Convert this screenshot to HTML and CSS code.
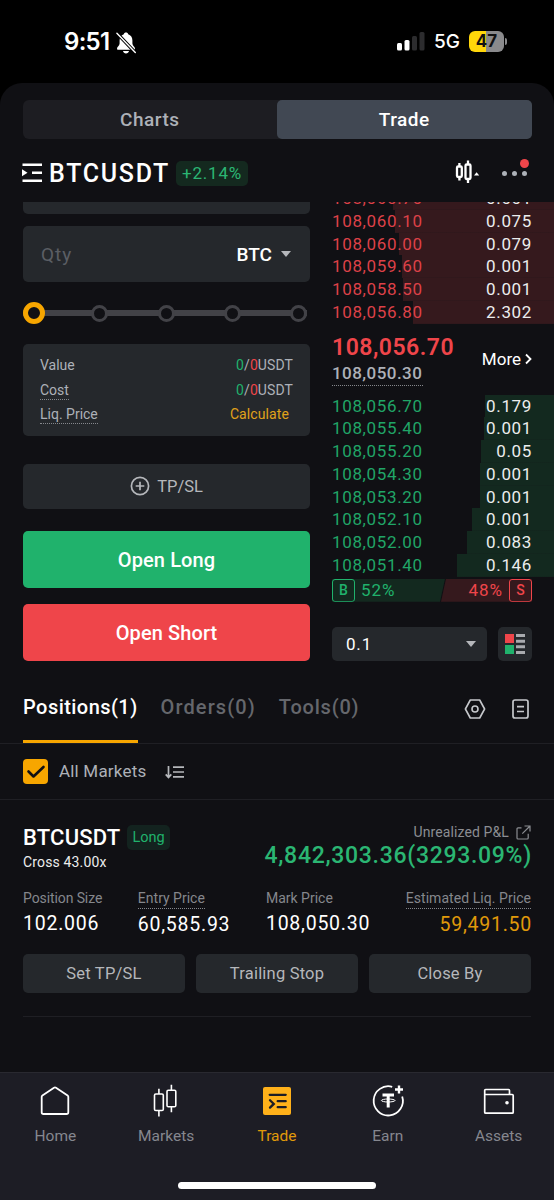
FILE: index.html
```html
<!DOCTYPE html>
<html lang="en">
<head>
    <meta charset="UTF-8">
    <meta name="viewport" content="width=device-width, initial-scale=1">
    <title>BTCUSDT Trade</title>
    <link rel="stylesheet" href="styles.css">
</head>
<body>

<header class="status-bar">
    <div class="status-left">
        <span class="clock">9:51</span>
        <svg width="20" height="22" viewBox="0 0 20 22">
            <path d="M10 .6c1.200 0 2 .7 2.200 1.700 2.700.9 4.200 3.200 4.200 6.200v3c0 2 2.600 3.300 2.600 5.200 0 .7-.5 1.100-1.200 1.100H2.200c-.7 0-1.200-.4-1.200-1.100 0-1.900 2.600-3.200 2.600-5.200v-3c0-3 1.500-5.300 4.200-6.200C8 1.300 8.800.6 10 .6zM7 18.900h6c-.3 1.500-1.500 2.500-3 2.500s-2.700-1-3-2.500z" fill="#fff"/>
            <path d="M.9 1.200l18.400 19.400" stroke="#000" stroke-width="3.400"/>
            <path d="M.9 1.200l18.400 19.400" stroke="#fff" stroke-width="1.400" stroke-linecap="round"/>
        </svg>
    </div>
    <div class="status-right">
        <svg class="signal" width="28" height="19" viewBox="0 0 28 19">
            <rect x="0" y="11" width="5" height="7.500" rx="1.500" fill="#fff"/>
            <rect x="7.500" y="8" width="5" height="10.500" rx="1.500" fill="#fff"/>
            <rect x="15" y="4" width="5" height="14.500" rx="1.500" fill="#2c2c2e"/>
            <rect x="22.500" y="0" width="5" height="18.500" rx="1.500" fill="#2c2c2e"/>
        </svg>
        <span class="network">5G</span>
        <span class="battery">47</span>
        <span class="battery-tip"></span>
    </div>
</header>

<main class="screen">
    <div class="segmented">
        <div class="segment">Charts</div>
        <div class="segment active">Trade</div>
    </div>

    <div class="pair-bar">
        <svg width="21" height="20" viewBox="0 0 21 20">
            <path d="M.5 1.800h19.500M10 9.800h10M.5 17.800h19.500" stroke="#fff" stroke-width="2.400"/>
            <path d="M0 6.300l5.500 3.500L0 13.300z" fill="#fff"/>
        </svg>
        <h1 class="pair-name">BTCUSDT</h1>
        <span class="change">+2.14%</span>
        <div class="pair-tools">
            <svg width="25" height="24" viewBox="0 0 25 24" fill="none" stroke="#fff" stroke-width="2.300">
                <rect x="2" y="6.500" width="4.800" height="10.500" rx="1.200"/>
                <path d="M4.400 3v3.500M4.400 17v3.500M13 .5v4M13 19v4"/>
                <rect x="10.500" y="4.500" width="5" height="14.500" rx="1.200"/>
                <path d="M19 15.500h5.200l-2.600-3.200z" fill="#fff" stroke="none"/>
            </svg>
            <div class="more-dots">
                <i></i><i></i><i></i>
                <span class="alert-dot"></span>
            </div>
        </div>
    </div>

    <section class="trade">
        <div class="order-form">
            <div class="field price-field"></div>
            <div class="field qty-field">
                <span class="placeholder">Qty</span>
                <span class="coin">BTC</span>
                <span class="caret"></span>
            </div>
            <div class="slider">
                <span class="knob"></span>
                <span class="stop"></span>
                <span class="stop"></span>
                <span class="stop"></span>
                <span class="stop"></span>
            </div>
            <div class="field summary">
                <div class="summary-row"><span>Value</span><span><b class="up">0</b>/<b class="down">0</b>USDT</span></div>
                <div class="summary-row"><span class="hint">Cost</span><span><b class="up">0</b>/<b class="down">0</b>USDT</span></div>
                <div class="summary-row"><span class="hint">Liq. Price</span><span class="calculate">Calculate</span></div>
            </div>
            <div class="field tpsl">
                <svg width="20" height="20" viewBox="0 0 20 20" fill="none" stroke="#b5b7bb" stroke-width="1.700">
                    <circle cx="10" cy="10" r="8.600"/>
                    <path d="M5.700 10h8.600M10 5.700v8.600"/>
                </svg>
                <span>TP/SL</span>
            </div>
            <button class="open long">Open Long</button>
            <button class="open short">Open Short</button>
        </div>

        <div class="order-book">
            <div class="asks">
                <div class="level" style="--depth: 161px"><span>108,060.70</span><span>0.001</span></div>
                <div class="level" style="--depth: 159px"><span>108,060.10</span><span>0.075</span></div>
                <div class="level" style="--depth: 155px"><span>108,060.00</span><span>0.079</span></div>
                <div class="level" style="--depth: 152px"><span>108,059.60</span><span>0.001</span></div>
                <div class="level" style="--depth: 151px"><span>108,058.50</span><span>0.001</span></div>
                <div class="level" style="--depth: 141px"><span>108,056.80</span><span>2.302</span></div>
            </div>
            <div class="last">
                <div>
                    <div class="last-price">108,056.70</div>
                    <div class="mark-price">108,050.30</div>
                </div>
                <div class="more">
                    <span>More</span>
                    <svg width="7" height="12" viewBox="0 0 7 12" fill="none" stroke="#fff" stroke-width="1.800"><path d="M1 1.500L5.500 6 1 10.500"/></svg>
                </div>
            </div>
            <div class="bids">
                <div class="level" style="--depth: 69px"><span>108,056.70</span><span>0.179</span></div>
                <div class="level" style="--depth: 70px"><span>108,055.40</span><span>0.001</span></div>
                <div class="level" style="--depth: 73px"><span>108,055.20</span><span>0.05</span></div>
                <div class="level" style="--depth: 74px"><span>108,054.30</span><span>0.001</span></div>
                <div class="level" style="--depth: 74px"><span>108,053.20</span><span>0.001</span></div>
                <div class="level" style="--depth: 82px"><span>108,052.10</span><span>0.001</span></div>
                <div class="level" style="--depth: 87px"><span>108,052.00</span><span>0.083</span></div>
                <div class="level" style="--depth: 97px"><span>108,051.40</span><span>0.146</span></div>
            </div>
            <div class="ratio">
                <div class="buy"><em>B</em><span>52%</span></div>
                <div class="sell"><span>48%</span><em>S</em></div>
            </div>
            <div class="book-controls">
                <div class="step">
                    <span>0.1</span>
                    <span class="caret"></span>
                </div>
                <div class="book-layout">
                    <svg width="20" height="20" viewBox="0 0 20 20">
                        <path d="M0 0h9v9H0z" fill="#ef454a"/>
                        <path d="M0 11h9v9H0z" fill="#20b26c"/>
                        <path d="M11 1.500h9M11 7.200h9M11 12.800h9M11 18.500h9" stroke="#a9abaf" stroke-width="3"/>
                    </svg>
                </div>
            </div>
        </div>
    </section>

    <nav class="tabs">
        <div class="tab active">Positions(1)</div>
        <div class="tab orders">Orders(0)</div>
        <div class="tab tools">Tools(0)</div>
        <div class="tab-icons">
            <svg width="22" height="20" viewBox="0 0 22 20" fill="none" stroke="#c6c8cc" stroke-width="1.600" stroke-linejoin="round">
                <path d="M6.300 1h9.400L20.600 10l-4.900 9H6.300L1.400 10z"/>
                <circle cx="11" cy="10" r="3"/>
            </svg>
            <svg width="17" height="20" viewBox="0 0 17 20" fill="none" stroke="#c6c8cc" stroke-width="1.700">
                <rect x="1" y="1" width="15" height="18" rx="2"/>
                <path d="M5 7.700h7M5 12.500h7"/>
            </svg>
        </div>
    </nav>

    <div class="filter">
        <span class="checkbox">
            <svg width="18" height="14" viewBox="0 0 18 14" fill="none" stroke="#101014" stroke-width="2.600" stroke-linecap="round" stroke-linejoin="round"><path d="M1.500 6.500l5 5L16.500 2"/></svg>
        </span>
        <span class="filter-label">All Markets</span>
        <svg width="20" height="14" viewBox="0 0 20 14" fill="none" stroke="#b5b7bb" stroke-width="1.700">
            <path d="M3.500 1v11M.7 9.400l2.800 3 2.800-3M8 2.200h11M8 7h11M8 11.800h11"/>
        </svg>
    </div>

    <section class="position">
        <div class="position-head">
            <div>
                <div class="position-title">
                    <h2>BTCUSDT</h2>
                    <span class="side">Long</span>
                </div>
                <div class="margin-mode">Cross 43.00x</div>
            </div>
            <div class="pnl">
                <div class="pnl-label">
                    <span>Unrealized P&amp;L</span>
                    <svg width="15" height="15" viewBox="0 0 15 15" fill="none" stroke="#8b8d92" stroke-width="1.200">
                        <path d="M5.500 2.800H2a1 1 0 0 0-1 1V13a1 1 0 0 0 1 1h9.200a1 1 0 0 0 1-1V8.800M8.500 1H14v5.500M14 1L6.300 8.700"/>
                    </svg>
                </div>
                <div class="pnl-value">4,842,303.36(3293.09%)</div>
            </div>
        </div>
        <div class="stats">
            <div class="stat"><span>Position Size</span><strong>102.006</strong></div>
            <div class="stat"><span class="hint">Entry Price</span><strong>60,585.93</strong></div>
            <div class="stat"><span>Mark Price</span><strong>108,050.30</strong></div>
            <div class="stat liq"><span class="hint">Estimated Liq. Price</span><strong>59,491.50</strong></div>
        </div>
        <div class="actions">
            <button>Set TP/SL</button>
            <button>Trailing Stop</button>
            <button>Close By</button>
        </div>
    </section>
</main>

<footer class="bottom-nav">
    <div class="nav-items">
        <div class="nav-item">
            <svg width="32" height="32" viewBox="0 0 32 32" fill="none" stroke="#fff" stroke-width="1.800" stroke-linejoin="round"><path d="M2.700 11.800Q2.700 11 3.400 10.500L15 2.700q1-.6 2 0l11.600 7.800q.7.500.7 1.300v15.400q0 1.800-1.800 1.800h-23q-1.800 0-1.800-1.800z"/></svg>
            <span>Home</span>
        </div>
        <div class="nav-item">
            <svg width="32" height="32" viewBox="0 0 32 32" fill="none" stroke="#fff" stroke-width="1.600">
                <rect x="4.500" y="9" width="8.800" height="16.500" rx="1.300"/>
                <rect x="17" y="5.200" width="8.800" height="16.500" rx="1.300"/>
                <path d="M8.900 3.800V9M8.900 25.500V31.500M21.400-.2v5.400M21.400 21.700v5.600"/>
            </svg>
            <span>Markets</span>
        </div>
        <div class="nav-item active">
            <svg width="32" height="32" viewBox="0 0 32 32" fill="none">
                <rect x="2" y="2" width="28" height="28" rx="2" fill="#ffb11a"/>
                <path d="M8.700 9.800h16M16.700 16.200h8M16.700 22.200h8M9 15.200l3.800 3.700L9 22.600" stroke="#1d1d25" stroke-width="2.300" stroke-linecap="round"/>
            </svg>
            <span>Trade</span>
        </div>
        <div class="nav-item">
            <svg width="32" height="32" viewBox="0 0 32 32" fill="none" stroke="#fff" stroke-width="1.800">
                <path d="M20.200 1.800A14.600 14.600 0 1 0 30.200 11.500"/>
                <path d="M27 .5v8M23 4.500h8" stroke-width="2.400"/>
                <path d="M10.500 10h11.500M16.200 10V22.500" stroke-width="3"/>
                <ellipse cx="16.200" cy="15.500" rx="6.800" ry="1.500" stroke-width="1"/>
            </svg>
            <span>Earn</span>
        </div>
        <div class="nav-item">
            <svg width="32" height="32" viewBox="0 0 32 32" fill="none" stroke="#fff" stroke-width="1.700" stroke-linejoin="round">
                <path d="M26.500 9.500V5.500q0-1-1-1H2.700q-1 0-1 1v21.700q0 1 1 1h26.500q1 0 1-1V10.500q0-1-1-1H1.700"/>
                <circle cx="24" cy="17.800" r="1.800" fill="#fff" stroke="none"/>
            </svg>
            <span>Assets</span>
        </div>
    </div>
    <div class="home-indicator"></div>
</footer>

</body>
</html>
```
FILE: styles.css
```css
* {
    box-sizing: border-box;
}

body {
    display: flex;
    flex-direction: column;
    height: 1200px;
    margin: 0;
    background: #000;
    color: #fff;
    font-family: Roboto, "Noto Sans", sans-serif;
    overflow: hidden;
}

svg {
    display: block;
    flex: none;
    overflow: visible;
}

h1, h2 {
    margin: 0;
    font-weight: 500;
}

button {
    padding: 0;
    border: none;
    font-family: inherit;
}

/* status bar */
.status-bar {
    display: flex;
    justify-content: space-between;
    height: 83px;
    padding: 0 47px 0 64px;
}

.status-left,
.status-right {
    display: flex;
    align-items: center;
    height: 83px;
}

.status-left svg {
    margin: 2px 0 0 1px;
}

.clock {
    margin-right: 6px;
    font: 600 24px Inter, sans-serif;
    letter-spacing: -0.7px;
}

.network {
    margin: 0 9px 0 9px;
    font: 500 19px Inter, sans-serif;
}

.battery {
    width: 35px;
    height: 21px;
    border-radius: 6px;
    background: linear-gradient(to right, #ffd60a 17px, #8a8a8c 17px);
    color: #111;
    font: 700 17px/21px Inter, sans-serif;
    text-align: center;
}

.battery-tip {
    width: 2px;
    height: 7px;
    margin-left: 1px;
    border-radius: 0 2px 2px 0;
    background: #8a8a8c;
}

/* screen */
.screen {
    flex: 1;
    padding-top: 17px;
    border-radius: 22px 22px 0 0;
    background: #101014;
}

.segmented {
    display: flex;
    height: 39px;
    margin: 0 22.500px;
    border-radius: 6px;
    background: #1d1d22;
}

.segment {
    flex: 1;
    border-radius: 5px;
    color: #adb1b8;
    font-size: 19px;
    font-weight: 500;
    line-height: 40px;
    letter-spacing: 0.5px;
    text-align: center;
}

.segment.active {
    background: #414853;
    color: #fff;
}

.pair-bar {
    display: flex;
    align-items: center;
    height: 63px;
    padding: 5px 27px 0 22px;
}

.pair-name {
    margin-left: 6px;
    font-size: 25px;
    letter-spacing: 1.700px;
}

.change {
    height: 25px;
    margin-left: 6px;
    padding: 0 6px;
    border-radius: 5px;
    background: #14291f;
    color: #2bb673;
    font-size: 17px;
    line-height: 25px;
    letter-spacing: 0.8px;
}

.pair-tools {
    display: flex;
    align-items: center;
    gap: 22px;
    margin: -3px 0 0 auto;
}

.more-dots {
    position: relative;
    display: flex;
    gap: 5px;
    margin-top: 3px;
}

.more-dots i {
    width: 5px;
    height: 5px;
    border-radius: 50%;
    background: #adb1b8;
}

.alert-dot {
    position: absolute;
    top: -12px;
    right: -2px;
    width: 9px;
    height: 9px;
    border-radius: 50%;
    background: #ef454a;
}

/* order form */
.trade {
    display: flex;
    height: 459px;
    padding-left: 23px;
    overflow: hidden;
}

.order-form {
    display: flex;
    flex-direction: column;
    width: 287px;
    margin-right: 22px;
}

.field {
    flex: none;
    border-radius: 5px;
    background: #25282c;
}

.price-field {
    height: 56px;
    margin-top: -44px;
}

.qty-field {
    display: flex;
    align-items: center;
    height: 56px;
    margin-top: 12px;
    padding: 0 19px 0 18px;
    font-size: 19px;
}

.placeholder {
    color: #5b5e64;
    letter-spacing: 1px;
}

.coin {
    margin-left: auto;
    font-weight: 500;
}

.caret {
    margin-left: 9px;
    border: 5px solid transparent;
    border-top: 6px solid #b5b7bb;
    border-bottom: 0;
}

.slider {
    display: flex;
    align-items: center;
    justify-content: space-between;
    height: 22px;
    margin: 20px 3px 0 0;
    background: linear-gradient(#424247, #424247) center / 100% 6px no-repeat;
}

.knob {
    width: 22px;
    height: 22px;
    border: 5px solid #f7a600;
    border-radius: 50%;
    background: #101014;
}

.stop {
    width: 17px;
    height: 17px;
    border: 3px solid #424247;
    border-radius: 50%;
    background: #101014;
}

.knob + .stop {
    margin-left: -3px;
}

.summary {
    height: 92px;
    margin-top: 20px;
    padding: 9px 17px 0;
    color: #adb1b8;
    font-size: 14px;
}

.summary-row {
    display: flex;
    align-items: flex-start;
    justify-content: space-between;
    height: 24.500px;
    line-height: 24.500px;
}

.summary-row span + span {
    letter-spacing: 0.1px;
}

.summary-row b {
    font-weight: 400;
}

.up {
    color: #20b26c;
}

.down {
    color: #ef454a;
}

.hint {
    border-bottom: 1px dotted #85878c;
}

.summary-row .hint {
    height: 22px;
}

.summary-row .calculate {
    margin-right: 4px;
    color: #e0a21a;
}

.tpsl {
    display: flex;
    align-items: center;
    justify-content: center;
    gap: 7px;
    height: 45px;
    margin-top: 28px;
    padding-bottom: 1px;
    color: #b5b7bb;
    font-size: 16.500px;
}

.open {
    flex: none;
    height: 57px;
    border-radius: 5px;
    color: #fff;
    font-size: 20px;
    font-weight: 500;
    letter-spacing: 0.1px;
}

.long {
    margin-top: 22px;
    background: #20b26c;
}

.short {
    margin-top: 16px;
    background: #ef454a;
}

/* order book */
.order-book {
    flex: 1;
}

.asks {
    margin-top: -14.800px;
}

.level {
    display: flex;
    justify-content: space-between;
    height: 22.750px;
    padding-right: 22px;
    background: linear-gradient(#13291f, #13291f) right / var(--depth) 100% no-repeat;
    color: #eceded;
    font-size: 17px;
    line-height: 23px;
    letter-spacing: 0.65px;
}

.level span:first-child {
    color: #20a567;
}

.asks .level {
    background-image: linear-gradient(#35191d, #35191d);
}

.asks .level span:first-child {
    color: #dd4148;
}

.last {
    display: flex;
    justify-content: space-between;
    height: 70.800px;
    padding: 10px 22px 0 0;
}

.last-price {
    color: #ef454a;
    font-size: 23px;
    font-weight: 600;
    line-height: 28px;
    letter-spacing: 0.5px;
}

.mark-price {
    width: 91px;
    height: 24px;
    border-bottom: 1px dotted #85878c;
    color: #adb1b8;
    font-size: 17px;
    font-weight: 500;
    line-height: 23px;
    letter-spacing: 0.45px;
}

.more {
    display: flex;
    align-items: center;
    gap: 4px;
    height: 51px;
    font-size: 17px;
}

.ratio {
    display: flex;
    gap: 1px;
    height: 23px;
    margin: 2.200px 22px 0 0;
    font-size: 17px;
    line-height: 23px;
}

.ratio span {
    letter-spacing: 1px;
}

.buy,
.sell {
    display: flex;
    gap: 6px;
}

.buy {
    width: 113px;
    background: #13291f;
    clip-path: polygon(0 0, 100% 0, 108px 100%, 0 100%);
    color: #20b26c;
}

.sell {
    flex: 1;
    justify-content: flex-end;
    margin-left: -5px;
    background: #35191d;
    clip-path: polygon(5px 0, 100% 0, 100% 100%, 0 100%);
    color: #ef454a;
}

.ratio em {
    width: 23px;
    border: 1.500px solid;
    border-radius: 3px;
    font-size: 14px;
    font-style: normal;
    font-weight: 500;
    line-height: 20px;
    text-align: center;
}

.book-controls {
    display: flex;
    gap: 11px;
    margin: 25px 22px 0 0;
}

.step {
    display: flex;
    flex: 1;
    align-items: center;
    justify-content: space-between;
    height: 34px;
    padding: 0 11px 0 14px;
    border-radius: 5px;
    background: #25282c;
    font-size: 17px;
    letter-spacing: 0.8px;
}

.book-layout {
    display: flex;
    align-items: center;
    justify-content: center;
    width: 34px;
    height: 34px;
    border-radius: 5px;
    background: #25282c;
}

/* tabs */
.tabs {
    display: flex;
    height: 83px;
    padding: 0 25px 0 23px;
    border-bottom: 1px solid #1f1f24;
}

.tab {
    height: 82px;
    margin-right: 23px;
    color: #65676c;
    font-size: 20px;
    font-weight: 500;
    line-height: 92px;
    letter-spacing: 0.8px;
}

.tab.active {
    border-bottom: 3px solid #f7a600;
    color: #fff;
    letter-spacing: 0.45px;
}

.tab.orders {
    letter-spacing: 1.100px;
}

.tab-icons {
    display: flex;
    align-items: center;
    gap: 26px;
    height: 96px;
    margin-left: auto;
}

.filter {
    display: flex;
    align-items: center;
    height: 56px;
    padding-left: 23px;
    border-bottom: 1px solid #1f1f24;
}

.checkbox {
    display: flex;
    align-items: center;
    justify-content: center;
    width: 25px;
    height: 25px;
    border-radius: 4px;
    background: #f7a600;
}

.filter-label {
    margin: 0 19px 1px 11px;
    color: #adb1b8;
    font-size: 17px;
    letter-spacing: 0.2px;
}

/* position card */
.position {
    height: 217px;
    margin: 0 23px;
    padding-top: 24px;
    border-bottom: 1px solid #1f1f24;
}

.position-head {
    display: flex;
    justify-content: space-between;
}

.position-title {
    display: flex;
    align-items: center;
    gap: 7px;
    height: 27px;
}

.position h2 {
    font-size: 22px;
    letter-spacing: 0.2px;
}

.side {
    height: 25px;
    padding: 0 5px;
    border-radius: 5px;
    background: #13231f;
    color: #20b26c;
    font-size: 14.500px;
    line-height: 26px;
}

.margin-mode {
    color: #eceded;
    font-size: 14px;
    line-height: 22px;
    letter-spacing: 0.15px;
}

.pnl-label {
    display: flex;
    align-items: center;
    justify-content: flex-end;
    gap: 7px;
    height: 16px;
    color: #8b8d92;
    font-size: 14px;
    letter-spacing: 0.1px;
}

.pnl-value {
    margin-right: -1px;
    color: #2bb673;
    font-size: 23px;
    font-weight: 500;
    line-height: 32px;
    letter-spacing: 0.7px;
}

.stats {
    display: flex;
    justify-content: space-between;
    margin-top: 15px;
}

.stat {
    display: flex;
    flex-direction: column;
    align-items: flex-start;
    color: #85878c;
    font-size: 14px;
}

.stat span {
    height: 20px;
    line-height: 20px;
}

.stat .hint {
    height: 20.500px;
}

.stat:first-child span {
    letter-spacing: -0.1px;
}

.stat strong {
    margin-top: 3px;
    color: #fff;
    font-size: 19.500px;
    font-weight: 400;
    line-height: 25px;
    letter-spacing: 0.75px;
}

.stat.liq {
    align-items: flex-end;
    letter-spacing: 0.05px;
}

.stat.liq strong {
    margin-right: -1px;
    color: #e09a0a;
}

.actions {
    display: flex;
    gap: 11px;
    margin-top: 17px;
}

.actions button {
    flex: 1;
    height: 39px;
    border-radius: 5px;
    background: #25282c;
    color: #b5b7bb;
    font-size: 16.500px;
    letter-spacing: 0.2px;
}

/* bottom navigation */
.bottom-nav {
    display: flex;
    flex-direction: column;
    align-items: center;
    height: 128px;
    border-top: 1px solid #292930;
    background: #1d1d25;
}

.nav-items {
    display: flex;
    width: 100%;
    height: 109px;
    padding-top: 12px;
}

.nav-item {
    display: flex;
    flex: 1;
    flex-direction: column;
    align-items: center;
    color: #85878f;
    font-size: 15.500px;
}

.nav-item span {
    margin-top: 10px;
}

.nav-item.active {
    color: #e09a0a;
}

.home-indicator {
    width: 198px;
    height: 7px;
    border-radius: 4px;
    background: #fff;
}
```
